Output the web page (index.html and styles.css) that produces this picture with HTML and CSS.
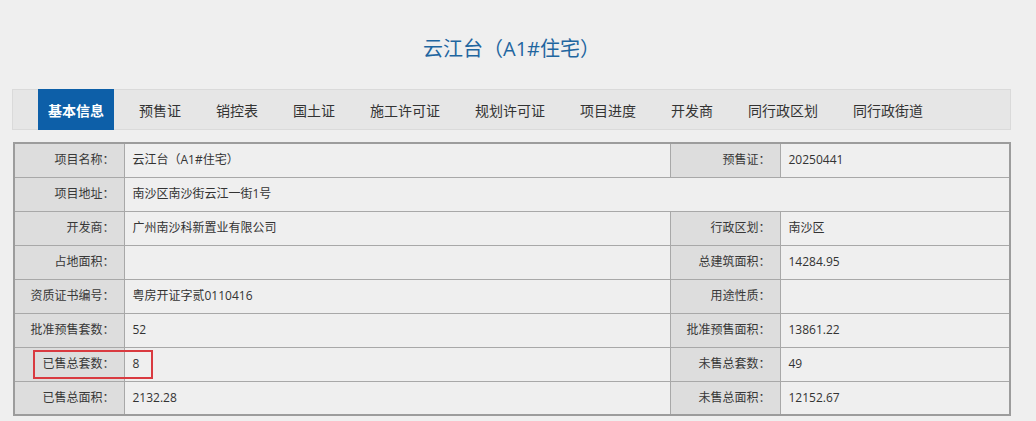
FILE: index.html
```html
<!DOCTYPE html>
<html lang="zh-CN">
<head>
<meta charset="utf-8">
<title>云江台（A1#住宅）</title>
<link rel="stylesheet" href="styles.css">
</head>
<body>
<div class="page">
  <h1 class="title">云江台（A1#住宅）</h1>
  <nav class="tabs">
    <a class="tab active">基本信息</a>
    <a class="tab">预售证</a>
    <a class="tab">销控表</a>
    <a class="tab">国土证</a>
    <a class="tab">施工许可证</a>
    <a class="tab">规划许可证</a>
    <a class="tab">项目进度</a>
    <a class="tab">开发商</a>
    <a class="tab">同行政区划</a>
    <a class="tab">同行政街道</a>
  </nav>
  <div class="table-wrap">
    <table class="info">
      <colgroup>
        <col class="c-label"><col class="c-val1"><col class="c-label"><col>
      </colgroup>
      <tr><th>项目名称：</th><td>云江台（A1#住宅）</td><th>预售证：</th><td>20250441</td></tr>
      <tr><th>项目地址：</th><td colspan="3">南沙区南沙街云江一街1号</td></tr>
      <tr><th>开发商：</th><td>广州南沙科新置业有限公司</td><th>行政区划：</th><td>南沙区</td></tr>
      <tr><th>占地面积：</th><td></td><th>总建筑面积：</th><td>14284.95</td></tr>
      <tr><th>资质证书编号：</th><td>粤房开证字贰0110416</td><th>用途性质：</th><td></td></tr>
      <tr><th>批准预售套数：</th><td>52</td><th>批准预售面积：</th><td>13861.22</td></tr>
      <tr><th>已售总套数：</th><td>8</td><th>未售总套数：</th><td>49</td></tr>
      <tr><th>已售总面积：</th><td>2132.28</td><th>未售总面积：</th><td>12152.67</td></tr>
    </table>
    <div class="highlight"></div>
  </div>
</div>
</body>
</html>
```
FILE: styles.css
```css
html, body {
  margin: 0;
  padding: 0;
  background: #efefef;
}
body {
  font-family: "Open Sans", "Noto Sans CJK SC", sans-serif;
  color: #333;
}
.page {
  width: 999px;
  margin-left: 12px;
  padding-top: 34px;
}
.title {
  margin: 0;
  text-align: center;
  font-weight: normal;
  font-size: 20px;
  line-height: 30px;
  color: #1f66a0;
}
.tabs {
  margin-top: 25px;
  height: 41px;
  box-sizing: border-box;
  background: #e6e6e6;
  border: 1px solid #dadada;
  display: flex;
  align-items: stretch;
  padding-left: 25px;
}
.tab {
  display: flex;
  align-items: center;
  padding: 0 10px;
  margin-right: 15px;
  margin-top: -1px;
  margin-bottom: -1px;
  font-size: 14px;
  color: #333;
  cursor: pointer;
}
.tab.active {
  background: #0d5fa8;
  color: #fff;
  font-weight: bold;
}
.table-wrap {
  position: relative;
  margin-top: 12px;
  margin-left: 1px;
}
.info {
  width: 998px;
  border-collapse: collapse;
  border: 2px solid #9c9c9c;
  font-size: 12px;
  table-layout: fixed;
}
.c-label { width: 110px; }
.c-val1 { width: 546px; }
.info th, .info td {
  border: 1px solid #a8a8a8;
  height: 34px;
  padding: 0;
  line-height: 16px;
  box-sizing: border-box;
  font-weight: normal;
}
.info th {
  background: #dddddd;
  text-align: right;
  padding-right: 9px;
  color: #383838;
}
.info td {
  background: #efefef;
  text-align: left;
  padding-left: 8px;
}
.highlight {
  position: absolute;
  left: 20px;
  top: 208px;
  width: 120px;
  height: 29px;
  box-sizing: border-box;
  border: 2px solid #d93a40;
  pointer-events: none;
}
```
